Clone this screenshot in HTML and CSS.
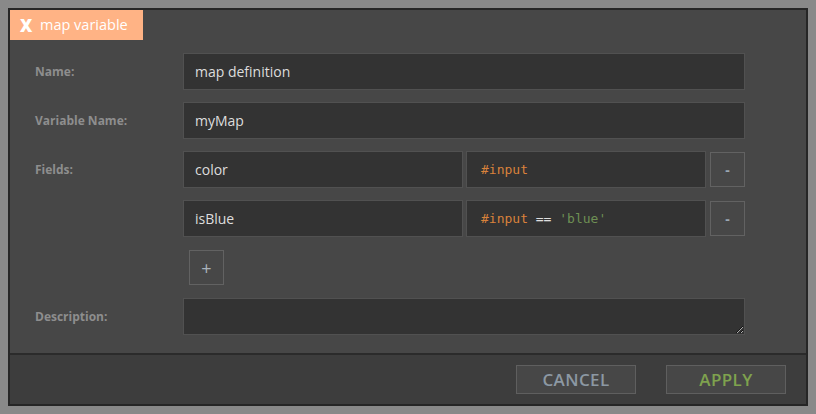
FILE: index.html
```html
<!DOCTYPE html>
<html>
<head>
<meta charset="utf-8">
<link rel="stylesheet" href="styles.css">
</head>
<body>
<div class="dialog">
  <div class="tabbar">
    <div class="tab"><span class="tab-x">X</span><span class="tab-title">map variable</span></div>
  </div>
  <div class="content">
    <div class="row">
      <label class="label">Name:</label>
      <div class="field"><input class="input" type="text" value="map definition"></div>
    </div>
    <div class="row">
      <label class="label">Variable Name:</label>
      <div class="field"><input class="input" type="text" value="myMap"></div>
    </div>
    <div class="row">
      <label class="label">Fields:</label>
      <div class="field fields">
        <div class="input key">color</div>
        <div class="input code"><span class="code-line"><span class="c-var">#input</span></span></div>
        <button class="mini">-</button>
      </div>
    </div>
    <div class="row">
      <span class="label"></span>
      <div class="field fields">
        <div class="input key">isBlue</div>
        <div class="input code"><span class="code-line"><span class="c-var">#input</span> <span class="c-op">==</span> <span class="c-str">'blue'</span></span></div>
        <button class="mini">-</button>
      </div>
    </div>
    <div class="row row-add">
      <span class="label"></span>
      <div class="field"><button class="mini add">+</button></div>
    </div>
    <div class="row row-desc">
      <label class="label">Description:</label>
      <div class="field"><textarea class="input area"></textarea></div>
    </div>
  </div>
  <div class="footer">
    <button class="btn cancel">CANCEL</button>
    <button class="btn apply">APPLY</button>
  </div>
</div>
</body>
</html>
```
FILE: styles.css
```css
* { box-sizing: border-box; }
html, body { margin: 0; padding: 0; }
body {
  background: #898989;
  padding: 8px;
  font-family: "Open Sans", "Noto Sans", sans-serif;
}
.dialog {
  width: 800px;
  height: 398px;
  border: 2px solid #262626;
  background: #474747;
  display: flex;
  flex-direction: column;
}
.tabbar { height: 30px; display: flex; }
.tab {
  width: 133px;
  height: 30px;
  background: #ffb385;
  color: #ffffff;
  display: flex;
  align-items: center;
  padding-left: 10px;
}
.tab-x { font-weight: 800; font-size: 17px; width: 20px; line-height: 1; margin-top: 1px; }
.tab-title { font-size: 14.5px; line-height: 1; }
.content {
  flex: 1;
  padding: 13px 61px 18px 25px;
  display: flex;
  flex-direction: column;
  gap: 12px;
  border-bottom: 2px solid #2b2b2b;
}
.row { display: flex; align-items: center; height: 37px; }
.row-add { height: 35px; margin-top: 1px; margin-bottom: 1px; }
.label {
  width: 148px;
  flex: none;
  color: #8e8e8e;
  font-size: 12px;
  font-weight: 700;
}
.field { flex: 1; display: flex; align-items: center; height: 100%; }
.input {
  height: 37px;
  width: 100%;
  background: #333333;
  border: 1px solid #515151;
  color: #dddddd;
  font-family: "Open Sans", "Noto Sans", sans-serif;
  font-size: 14px;
  padding: 0 11px;
  outline: none;
  display: flex;
  align-items: center;
}
.key { width: 280px; flex: none; margin-right: 3px; }
.code {
  width: 240px;
  flex: none;
  margin-right: 4px;
  font-family: "DejaVu Sans Mono", monospace;
  font-size: 13px;
  padding-left: 14px;
}
.code-line { white-space: pre; }
.c-var { color: #d9823b; }
.c-op { color: #e0e0e0; }
.c-str { color: #6e8f54; }
.mini {
  width: 35px;
  height: 35px;
  flex: none;
  background: #474747;
  border: 1px solid #626262;
  color: #9aa6b2;
  font-family: "Open Sans", sans-serif;
  font-size: 14px;
  font-weight: 700;
  padding: 0;
  display: flex;
  align-items: center;
  justify-content: center;
}
.add { margin-left: 6px; font-size: 18px; font-weight: 400; color: #a9b2bb; }
.area { resize: both; display: block; }
.footer {
  height: 49px;
  background: #3d3d3d;
  display: flex;
  justify-content: flex-end;
  align-items: center;
  gap: 30px;
  padding-right: 20px;
}
.btn {
  width: 120px;
  height: 29px;
  background: #474747;
  border: 1px solid #5f5f5f;
  font-family: "Open Sans", sans-serif;
  font-size: 17px;
  font-weight: 600;
  letter-spacing: 0.4px;
  padding: 0;
  line-height: 1;
}
.cancel { color: #8c98a3; }
.apply { color: #7fa24e; }
```
